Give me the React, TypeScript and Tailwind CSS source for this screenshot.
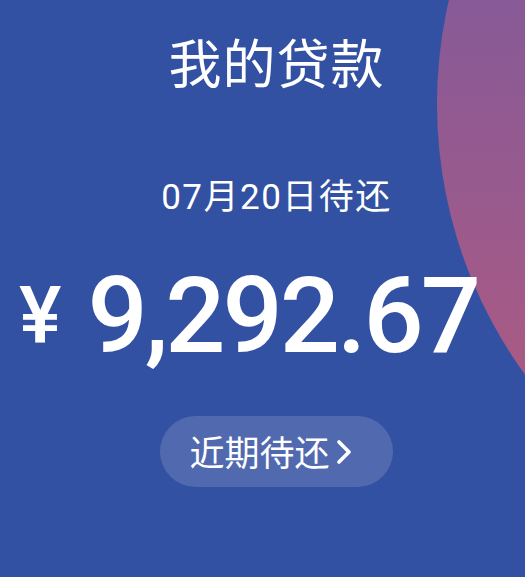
import { ChevronRight } from 'lucide-react'

export default function App() {
  return (
    <div className="relative h-[577px] w-[525px] overflow-hidden bg-[#3351a2] font-['Noto_Sans_CJK_SC',sans-serif] text-white">
      {/* decorative circle on the right */}
      <div className="absolute left-[437px] top-[-356px] h-[920px] w-[920px] rounded-full bg-[linear-gradient(180deg,#875a97_39%,#ab5a83_82%)]" />

      <div className="relative flex flex-col items-center">
        <h1 className="mt-[29px] ml-[28px] text-[53px] leading-[64px] font-normal tracking-[1px]">我的贷款</h1>

        <p className="mt-[85px] ml-[28px] font-['Roboto','Noto_Sans_CJK_SC',sans-serif] text-[35px] leading-[40px] tracking-[1.5px]">
          07月20日待还
        </p>

        <div className="mt-[45px] -ml-[28px] flex items-end font-['Roboto',sans-serif] font-medium leading-none">
          <span className="mr-[26px] mb-[13px] text-[80px]">¥</span>
          <span className="text-[106px] tracking-[-3px]">9,292.67</span>
        </div>

        <button className="mt-[47px] ml-[28px] flex h-[71px] w-[233px] items-center justify-center gap-[2px] rounded-full bg-white/15 pr-[8px] text-[35px] text-white">
          近期待还
          <ChevronRight className="-mx-[8px] h-[40px] w-[40px]" strokeWidth={2.2} />
        </button>
      </div>
    </div>
  )
}
